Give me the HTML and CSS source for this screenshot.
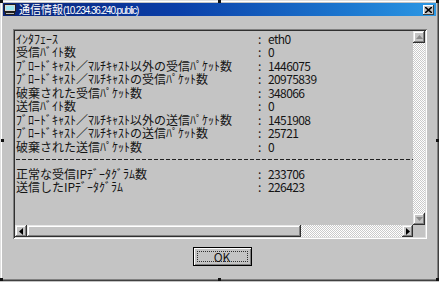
FILE: index.html
```html
<!DOCTYPE html>
<html lang="ja">
	<head>
		<meta charset="UTF-8" />
		<meta name="viewport" content="width=device-width, initial-scale=1.0" />
		<title>通信情報</title>
		<link rel="stylesheet" href="styles.css">
	</head>
	<body>
		<div class="frame">
			<div class="window">
				<div class="titlebar">
					<svg class="title-icon" width="12" height="11" viewBox="0 0 12 11">
						<rect x="0.5" y="0.5" width="11" height="7" fill="#d8d8d8" stroke="#202020" />
						<rect x="2" y="2" width="8" height="4" fill="#9ee8f0" />
						<rect x="3" y="8" width="6" height="1" fill="#404040" />
						<rect x="1.5" y="8.5" width="9" height="2" fill="#c0c0c0" stroke="#202020" />
					</svg>
					<span class="title">通信情報<span class="title-host">(10.234.36.240.public)</span></span>
					<div class="close-button">
						<svg width="7" height="6" viewBox="0 0 7 6">
							<path d="M0 0 L7 6 M7 0 L0 6" stroke="#000" stroke-width="1.6" />
						</svg>
					</div>
				</div>
				<div class="content">
					<div class="listbox">
						<div class="stats">
							<div class="row"><span>ｲﾝﾀﾌｪｰｽ</span><span class="sep">:</span><span class="value">eth0</span></div>
							<div class="row"><span>受信ﾊﾞｲﾄ数</span><span class="sep">:</span><span class="value">0</span></div>
							<div class="row"><span>ﾌﾞﾛｰﾄﾞｷｬｽﾄ／ﾏﾙﾁｷｬｽﾄ以外の受信ﾊﾟｹｯﾄ数</span><span class="sep">:</span><span class="value">1446075</span></div>
							<div class="row"><span>ﾌﾞﾛｰﾄﾞｷｬｽﾄ／ﾏﾙﾁｷｬｽﾄの受信ﾊﾟｹｯﾄ数</span><span class="sep">:</span><span class="value">20975839</span></div>
							<div class="row"><span>破棄された受信ﾊﾟｹｯﾄ数</span><span class="sep">:</span><span class="value">348066</span></div>
							<div class="row"><span>送信ﾊﾞｲﾄ数</span><span class="sep">:</span><span class="value">0</span></div>
							<div class="row"><span>ﾌﾞﾛｰﾄﾞｷｬｽﾄ／ﾏﾙﾁｷｬｽﾄ以外の送信ﾊﾟｹｯﾄ数</span><span class="sep">:</span><span class="value">1451908</span></div>
							<div class="row"><span>ﾌﾞﾛｰﾄﾞｷｬｽﾄ／ﾏﾙﾁｷｬｽﾄの送信ﾊﾟｹｯﾄ数</span><span class="sep">:</span><span class="value">25721</span></div>
							<div class="row"><span>破棄された送信ﾊﾟｹｯﾄ数</span><span class="sep">:</span><span class="value">0</span></div>
							<div class="rule"></div>
							<div class="row"><span>正常な受信IPﾃﾞｰﾀｸﾞﾗﾑ数</span><span class="sep">:</span><span class="value">233706</span></div>
							<div class="row"><span>送信したIPﾃﾞｰﾀｸﾞﾗﾑ</span><span class="sep">:</span><span class="value">226423</span></div>
						</div>
						<div class="vscroll">
							<div class="scroll-btn">
								<svg width="7" height="4" viewBox="0 0 7 4"><path d="M3.5 0 L7 4 L0 4 Z" fill="#8a8a8a" /></svg>
							</div>
							<div class="track"></div>
							<div class="scroll-btn">
								<svg width="7" height="4" viewBox="0 0 7 4"><path d="M0 0 L7 0 L3.5 4 Z" fill="#8a8a8a" /></svg>
							</div>
						</div>
						<div class="hscroll">
							<div class="scroll-btn">
								<svg width="4" height="7" viewBox="0 0 4 7"><path d="M4 0 L4 7 L0 3.5 Z" fill="#000" /></svg>
							</div>
							<div class="thumb"></div>
							<div class="track"></div>
							<div class="scroll-btn">
								<svg width="4" height="7" viewBox="0 0 4 7"><path d="M0 0 L4 3.5 L0 7 Z" fill="#000" /></svg>
							</div>
						</div>
						<div class="corner"></div>
					</div>
					<div class="buttons">
						<button class="ok-button"><span class="focus">OK</span></button>
					</div>
				</div>
			</div>
			<!-- selection handles -->
			<div class="handle h-tl"></div>
			<div class="handle h-tc"></div>
			<div class="handle h-tr"></div>
			<div class="handle h-ml"></div>
			<div class="handle h-mr"></div>
			<div class="handle h-bl"></div>
			<div class="handle h-bc"></div>
			<div class="handle h-br"></div>
		</div>
	</body>
</html>
```

FILE: styles.css
```css
* {
	padding: 0;
	margin: 0;
	box-sizing: border-box;
}
body {
	background-color: #c4c4c4;
	font-family: "Noto Sans CJK JP", "Liberation Sans", sans-serif;
	color: #141414;
}
.frame {
	position: relative;
	width: 439px;
	height: 282px;
}
.window {
	width: 439px;
	height: 281px;
	padding: 3px;
	background-color: #c4c4c4;
	box-shadow: inset -1px -1px #404040, inset 1px 1px #e0e0e0,
		inset -2px -2px #808080, inset 2px 2px #fff;
	display: flex;
	flex-direction: column;
}
.titlebar {
	height: 13px;
	display: flex;
	align-items: center;
	column-gap: 3px;
	padding: 0 2px 0 1px;
	background: linear-gradient(90deg, #0a2478 0%, #0a3ea8 40%, #1c78d0 80%, #2c98e4 100%);
	color: #fff;
}
.title-icon {
	flex-shrink: 0;
}
.title {
	flex: 1;
	font-size: 11px;
	line-height: 13px;
	white-space: nowrap;
}
.title-host {
	font-family: "Liberation Sans", sans-serif;
	font-size: 10px;
	letter-spacing: -1.1px;
}
.close-button {
	width: 11px;
	height: 10px;
	display: flex;
	align-items: center;
	justify-content: center;
	background-color: #c4c4c4;
	box-shadow: inset -1px -1px #404040, inset 1px 1px #fff;
}
.content {
	flex: 1;
	padding: 13px 9px 0 10px;
	display: flex;
	flex-direction: column;
}
.listbox {
	width: 414px;
	height: 210px;
	padding: 2px;
	display: grid;
	grid-template-columns: 1fr 12px;
	grid-template-rows: 1fr 12px;
	box-shadow: inset 1px 1px #808080, inset -1px -1px #fff,
		inset 2px 2px #303030, inset -2px -2px #dcdcdc;
}
.stats {
	overflow: hidden;
	padding: 1px 0 0 1px;
	font-size: 12px;
	line-height: 13.45px;
	white-space: nowrap;
}
.row {
	display: grid;
	grid-template-columns: 241px 11px auto;
}
.sep {
	padding-left: 1px;
}
.value {
	letter-spacing: -0.6px;
}
.rule {
	height: 13.45px;
	background: repeating-linear-gradient(90deg, #222 0 4px, transparent 4px 6px) left center / 100% 1px no-repeat;
}
.vscroll {
	display: flex;
	flex-direction: column;
}
.hscroll {
	display: flex;
}
.scroll-btn {
	width: 12px;
	height: 12px;
	flex-shrink: 0;
	display: flex;
	align-items: center;
	justify-content: center;
	background-color: #c4c4c4;
	box-shadow: inset -1px -1px #303030, inset 1px 1px #e8e8e8,
		inset -2px -2px #808080, inset 2px 2px #fff;
}
.hscroll .scroll-btn:last-child {
	width: 11px;
}
.track {
	flex: 1;
	background: repeating-conic-gradient(#fff 0 25%, #cacaca 0 50%) 0 0 / 2px 2px;
}
.thumb {
	width: 274px;
	flex-shrink: 0;
	background-color: #c4c4c4;
	box-shadow: inset -1px -1px #303030, inset 1px 1px #e8e8e8,
		inset -2px -2px #808080, inset 2px 2px #fff;
}
.corner {
	background-color: #c4c4c4;
}
.buttons {
	display: flex;
	justify-content: center;
	padding-left: 4px;
	margin-top: 8px;
}
.ok-button {
	width: 59px;
	height: 19px;
	padding: 3px;
	border: 1px solid #000;
	background-color: #c4c4c4;
	box-shadow: inset 1px 1px #fff, inset -1px -1px #808080;
	font-family: "Noto Sans CJK JP", sans-serif;
	font-size: 12px;
	color: #141414;
}
.focus {
	display: flex;
	height: 100%;
	align-items: center;
	justify-content: center;
	border: 1px dotted #303030;
	line-height: 11px;
}
.handle {
	position: absolute;
	width: 3px;
	height: 3px;
	background-color: #111;
}
.h-tl { left: 0; top: 0; }
.h-tc { left: 218px; top: 0; }
.h-tr { left: 436px; top: 0; }
.h-ml { left: 1px; top: 139px; }
.h-mr { left: 436px; top: 139px; }
.h-bl { left: 0; top: 278px; }
.h-bc { left: 218px; top: 278px; }
.h-br { left: 436px; top: 278px; }
```
